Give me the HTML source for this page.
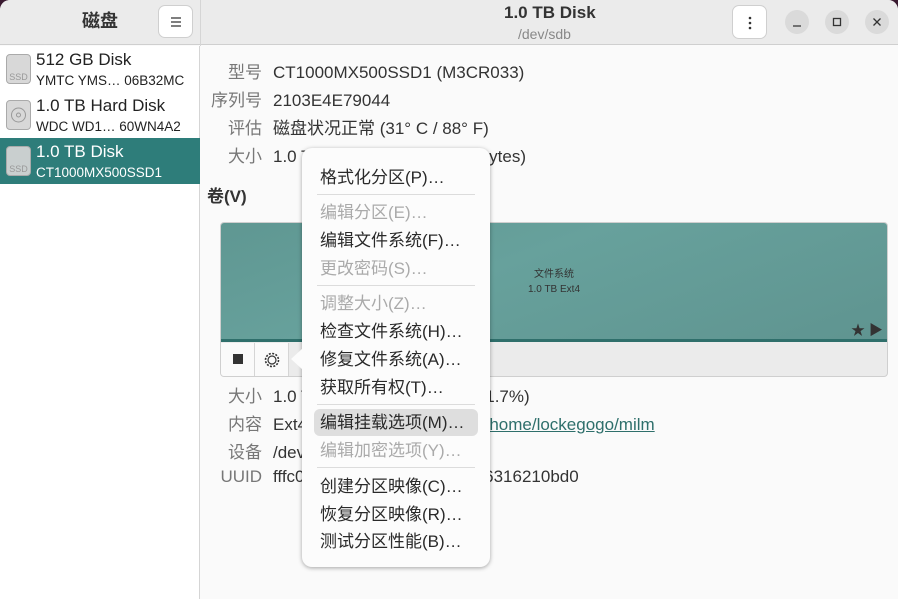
<!DOCTYPE html>
<html><head><meta charset="utf-8"><style>
*{margin:0;padding:0;box-sizing:border-box}
body{width:898px;height:599px;overflow:hidden;background:#3a1a30;font-family:"Liberation Sans","Noto Sans CJK SC",sans-serif;position:relative;line-height:18px}
.win{position:absolute;left:0;top:0;width:898px;height:599px;background:#fafafa;border-radius:10px 10px 0 0;overflow:hidden}
.hdr{position:absolute;left:0;top:0;width:898px;height:45px;background:#ebebeb;border-bottom:1px solid #cfcfcf}
.side{position:absolute;left:0;top:46px;width:200px;height:553px;background:#fff;border-right:1px solid #d5d5d5}
.vdiv{position:absolute;left:200px;top:0;width:1px;height:46px;background:#d5d5d5}
.abs{position:absolute;white-space:nowrap}
.btn{position:absolute;background:#fff;border:1px solid #cfcfcf;border-radius:7px}
.circ{position:absolute;width:24px;height:24px;border-radius:50%;background:#dadada}
.item{position:absolute;left:0;width:200px;height:46px}
.ico{position:absolute;left:6px;top:8px;width:25px;height:30px;border-radius:4px;background:#d8d8d8;border:1px solid #aaa}
.ico span{position:absolute;bottom:1px;left:0;width:100%;text-align:center;font-size:9px;line-height:10px;color:#999}
.t1{position:absolute;left:36px;top:5px;font-size:17px;color:#222;white-space:nowrap}
.t2{position:absolute;left:36px;top:26px;font-size:13.5px;color:#222;white-space:nowrap}
.lbl{position:absolute;width:62px;left:200px;text-align:right;font-size:17px;color:#777}
.val{position:absolute;left:273px;font-size:17px;color:#333;white-space:nowrap}
.menu{position:absolute;left:302px;top:148px;width:188px;height:419px;background:#fcfcfc;border-radius:10px;box-shadow:0 1px 4px rgba(0,0,0,.35)}
.mi{position:absolute;left:18px;font-size:17px;color:#2a2a2a;white-space:nowrap}
.mi.d{color:#aaa}
.sep{position:absolute;left:15px;width:158px;height:1px;background:#dcdcdc}
</style></head><body>
<div class="win">
<div class="hdr"></div>
<div class="vdiv"></div>
<div class="abs" style="left:82px;top:12px;font-size:18px;font-weight:bold;color:#333">磁盘</div>
<div class="btn" style="left:158px;top:5px;width:35px;height:33px"><svg width="35" height="33"><path d="M12 12h10M12 16h10M12 20h10" stroke="#333" stroke-width="1.3"/></svg></div>
<div class="abs" style="left:504px;top:4px;font-size:17px;font-weight:bold;color:#333">1.0 TB Disk</div>
<div class="abs" style="left:518px;top:25px;font-size:14px;color:#888">/dev/sdb</div>
<div class="btn" style="left:732px;top:5px;width:35px;height:34px"><svg width="35" height="34"><circle cx="17" cy="12" r="1.3" fill="#333"/><circle cx="17" cy="17" r="1.3" fill="#333"/><circle cx="17" cy="22" r="1.3" fill="#333"/></svg></div>
<div class="circ" style="left:785px;top:10px"><svg width="24" height="24"><path d="M8 16h8" stroke="#333" stroke-width="1.3"/></svg></div>
<div class="circ" style="left:825px;top:10px"><svg width="24" height="24"><rect x="8.5" y="8.5" width="7" height="7" fill="none" stroke="#333" stroke-width="1.3"/></svg></div>
<div class="circ" style="left:865px;top:10px"><svg width="24" height="24"><path d="M8.5 8.5l7 7M15.5 8.5l-7 7" stroke="#333" stroke-width="1.3"/></svg></div>

<div class="side">
<div class="item" style="top:0"><div class="ico"><span>SSD</span></div><div class="t1">512 GB Disk</div><div class="t2">YMTC YMS… 06B32MC</div></div>
<div class="item" style="top:46px"><div class="ico"><svg width="25" height="30" style="position:absolute;left:-1px;top:-1px"><circle cx="12.5" cy="15" r="7" fill="none" stroke="#999"/><circle cx="12.5" cy="15" r="2" fill="none" stroke="#999"/></svg></div><div class="t1">1.0 TB Hard Disk</div><div class="t2">WDC WD1… 60WN4A2</div></div>
<div class="item" style="top:92px;background:#2e7d7a"><div class="ico" style="background:#c9cfcf"><span>SSD</span></div><div class="t1" style="color:#fff">1.0 TB Disk</div><div class="t2" style="color:#fff">CT1000MX500SSD1</div></div>
</div>

<div class="lbl" style="top:64px">型号</div><div class="val" style="top:64px">CT1000MX500SSD1 (M3CR033)</div>
<div class="lbl" style="top:92px">序列号</div><div class="val" style="top:92px">2103E4E79044</div>
<div class="lbl" style="top:120px">评估</div><div class="val" style="top:120px">磁盘状况正常 (31° C / 88° F)</div>
<div class="lbl" style="top:148px">大小</div><div class="val" style="top:148px">1.0 TB (1,000,204,886,016 bytes)</div>
<div class="abs" style="left:207px;top:188px;font-size:17px;font-weight:bold;color:#333">卷(V)</div>

<div class="abs" style="left:220px;top:222px;width:668px;height:155px;border:1px solid #cfcfcf;border-radius:4px;background:#ebebeb;overflow:hidden">
<div style="position:absolute;left:0;top:0;width:668px;height:119px;background:linear-gradient(160deg,#5f9792,#67a19c 40%,#5f9490);border-bottom:3px solid #2f6f6b"></div>
<div class="abs" style="left:303px;top:46px;font-size:10px;line-height:12px;color:#333;text-align:center;width:60px">文件系统</div>
<div class="abs" style="left:303px;top:61px;font-size:10px;line-height:12px;color:#333;width:60px;text-align:center">1.0 TB Ext4</div>
<div class="abs" style="left:630px;top:98px;font-size:14px;color:#333">★ ▶</div>
<div style="position:absolute;left:0;top:120px;width:34px;height:34px;border-right:1px solid #d5d5d5;background:#fafafa"><div style="position:absolute;left:12px;top:11px;width:10px;height:10px;background:#333"></div></div>
<div style="position:absolute;left:34px;top:120px;width:34px;height:34px;border-right:1px solid #d5d5d5;background:#fafafa"><svg width="34" height="34"><circle cx="17" cy="17" r="6.5" fill="none" stroke="#333" stroke-width="1.6" stroke-dasharray="2 1.4"/><circle cx="17" cy="17" r="4" fill="none" stroke="#333" stroke-width="1.2"/></svg></div>
</div>

<div class="lbl" style="top:388px">大小</div><div class="val" style="top:388px">1.0 TB — 已用 17 GB (已用 1.7%)</div>
<div class="lbl" style="top:416px">内容</div><div class="val" style="top:416px">Ext4 (版本 1.0) — 已挂载到 <u style="color:#2e6f6b">/home/lockegogo/milm</u></div>
<div class="lbl" style="top:444px">设备</div><div class="val" style="top:444px">/dev/sdb1</div>
<div class="lbl" style="top:468px">UUID</div><div class="val" style="top:468px">fffc0000000000000000006a6316210bd0</div>

<div class="menu">
<svg style="position:absolute;left:-12px;top:200px" width="14" height="22"><path d="M13 0L1 11L13 22Z" fill="#fcfcfc"/></svg>
<div class="mi" style="top:21px">格式化分区(P)…</div>
<div class="sep" style="top:46px"></div>
<div class="mi d" style="top:56px">编辑分区(E)…</div>
<div class="mi" style="top:84px">编辑文件系统(F)…</div>
<div class="mi d" style="top:112px">更改密码(S)…</div>
<div class="sep" style="top:137px"></div>
<div class="mi d" style="top:147px">调整大小(Z)…</div>
<div class="mi" style="top:175px">检查文件系统(H)…</div>
<div class="mi" style="top:203px">修复文件系统(A)…</div>
<div class="mi" style="top:231px">获取所有权(T)…</div>
<div class="sep" style="top:256px"></div>
<div style="position:absolute;left:12px;top:261px;width:164px;height:27px;background:#dedede;border-radius:6px"></div>
<div class="mi" style="top:266px">编辑挂载选项(M)…</div>
<div class="mi d" style="top:294px">编辑加密选项(Y)…</div>
<div class="sep" style="top:319px"></div>
<div class="mi" style="top:330px">创建分区映像(C)…</div>
<div class="mi" style="top:358px">恢复分区映像(R)…</div>
<div class="mi" style="top:385px">测试分区性能(B)…</div>
</div>
</div>
</body></html>
